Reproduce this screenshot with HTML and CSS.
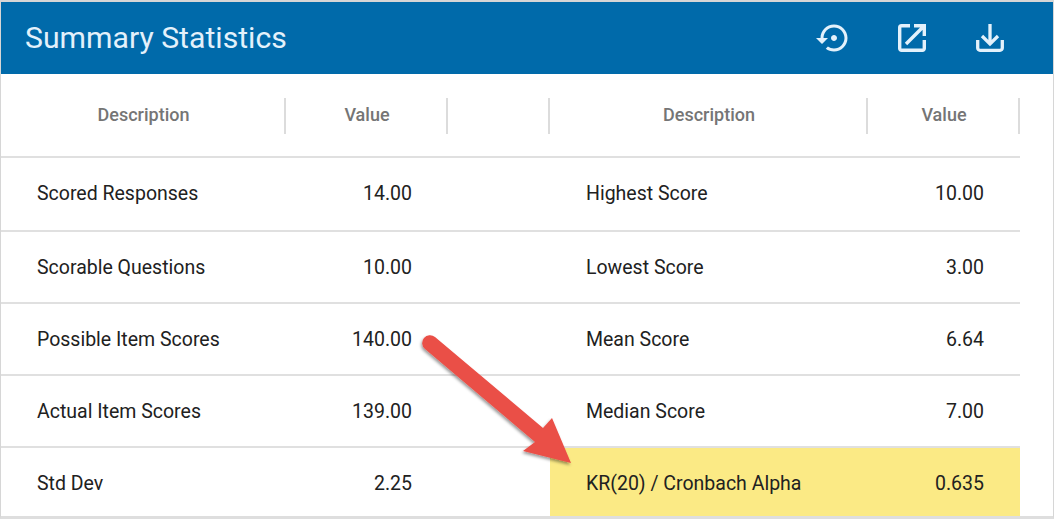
FILE: index.html
```html
<!DOCTYPE html>
<html lang="en">
<head>
<meta charset="utf-8">
<title>Summary Statistics</title>
<link rel="stylesheet" href="styles.css">
</head>
<body>
<main class="panel">
  <header class="bar">
    <h1 class="title">Summary Statistics</h1>
    <div class="tools">
      <svg class="icon" viewBox="0 0 24 24"><path fill="currentColor" d="M14 12c0-1.1-.9-2-2-2s-2 .9-2 2 .9 2 2 2 2-.9 2-2zm-2-9c-4.97 0-9 4.03-9 9H0l4 4 4-4H5c0-3.87 3.13-7 7-7s7 3.13 7 7-3.13 7-7 7c-1.51 0-2.91-.49-4.06-1.3l-1.42 1.44C8.04 20.3 9.94 21 12 21c4.97 0 9-4.03 9-9s-4.03-9-9-9z"/></svg>
      <svg class="icon" viewBox="0 0 36 36"><g fill="none" stroke="currentColor" stroke-width="3.400"><path d="M16 5.700H7.500A1.800 1.800 0 0 0 5.700 7.500V28.500A1.800 1.800 0 0 0 7.500 30.300H28.500A1.800 1.800 0 0 0 30.300 28.500V20"/><path d="M12 24L30 6M20 5.700H30.300V16"/></g></svg>
      <svg class="icon" viewBox="0 0 36 36"><g fill="none" stroke="currentColor" stroke-width="3.300"><path d="M5.700 20V28A2.300 2.300 0 0 0 8 30.300H28A2.300 2.300 0 0 0 30.300 28V20"/><path d="M18 4V24M10 16L18 24L26 16"/></g></svg>
    </div>
  </header>
  <div class="row head">
    <div class="cell th sep">Description</div>
    <div class="cell th sep">Value</div>
    <div class="cell th sep"></div>
    <div class="cell th sep">Description</div>
    <div class="cell th sep">Value</div>
  </div>
  <div class="row r1">
    <div class="cell name">Scored Responses</div><div class="cell val">14.00</div><div class="cell"></div>
    <div class="cell name">Highest Score</div><div class="cell val">10.00</div>
  </div>
  <div class="row">
    <div class="cell name">Scorable Questions</div><div class="cell val">10.00</div><div class="cell"></div>
    <div class="cell name">Lowest Score</div><div class="cell val">3.00</div>
  </div>
  <div class="row">
    <div class="cell name">Possible Item Scores</div><div class="cell val">140.00</div><div class="cell"></div>
    <div class="cell name">Mean Score</div><div class="cell val">6.64</div>
  </div>
  <div class="row">
    <div class="cell name">Actual Item Scores</div><div class="cell val">139.00</div><div class="cell"></div>
    <div class="cell name">Median Score</div><div class="cell val">7.00</div>
  </div>
  <div class="row last">
    <div class="cell name">Std Dev</div><div class="cell val">2.25</div><div class="cell"></div>
    <div class="cell name mark">KR(20) / Cronbach Alpha</div><div class="cell val mark">0.635</div>
  </div>
  <svg class="arrow" viewBox="0 0 180 150" width="180" height="150">
    <defs><filter id="soft" x="-20%" y="-20%" width="140%" height="140%"><feDropShadow dx="-1" dy="2" stdDeviation="1.500" flood-color="#000" flood-opacity=".4"/></filter></defs>
    <path filter="url(#soft)" fill="#ea4f47" d="M35 17L143 108L152 98L171 143L123 131L135 122L25 29A7.800 7.800 0 0 1 35 17Z"/>
  </svg>
</main>
</body>
</html>
```
FILE: styles.css
```css
* { box-sizing: border-box; }
html, body { margin: 0; padding: 0; }
body { width: 1054px; height: 519px; overflow: hidden; background: #fff; font-family: Roboto, "Liberation Sans", sans-serif; color: #212121; }
.panel { position: relative; height: 519px; border-top: 2px solid #d6d6d6; border-left: 1px solid #d6d6d6; border-right: 1px solid #d6d6d6; border-bottom: 3px solid #dedede; }
.bar { height: 72px; background: #006aaa; color: #e3f1fb; display: flex; align-items: center; padding: 0 45px 0 24px; }
.title { margin: 0; font-size: 30.200px; font-weight: 400; line-height: 1; }
.tools { margin-left: auto; display: flex; gap: 42px; }
.icon { width: 36px; height: 36px; display: block; }
.row { width: 1019px; display: grid; grid-template-columns: 285px 162px 102px 318px 152px; height: 72px; border-bottom: 2px solid #e0e0e0; align-items: stretch; }
.head { height: 84px; align-items: center; padding-top: 2px; }
.r1 { height: 74px; }
.r1 .cell { padding-bottom: 2px; }
.last { height: 68px; border-bottom: 0; }
.last .cell { padding-top: 2px; }
.cell { display: flex; align-items: center; font-size: 19.500px; }
.th { height: 36px; justify-content: center; font-weight: 500; font-size: 18px; color: #757575; padding: 0 0 3px 2px; }
.sep { border-right: 2px solid #dcdcdc; }
.name { padding-left: 36px; }
.val { justify-content: flex-end; padding-right: 36px; }
.mark { background: #fbea85; }
.arrow { position: absolute; left: 399px; top: 318px; overflow: visible; }
```
